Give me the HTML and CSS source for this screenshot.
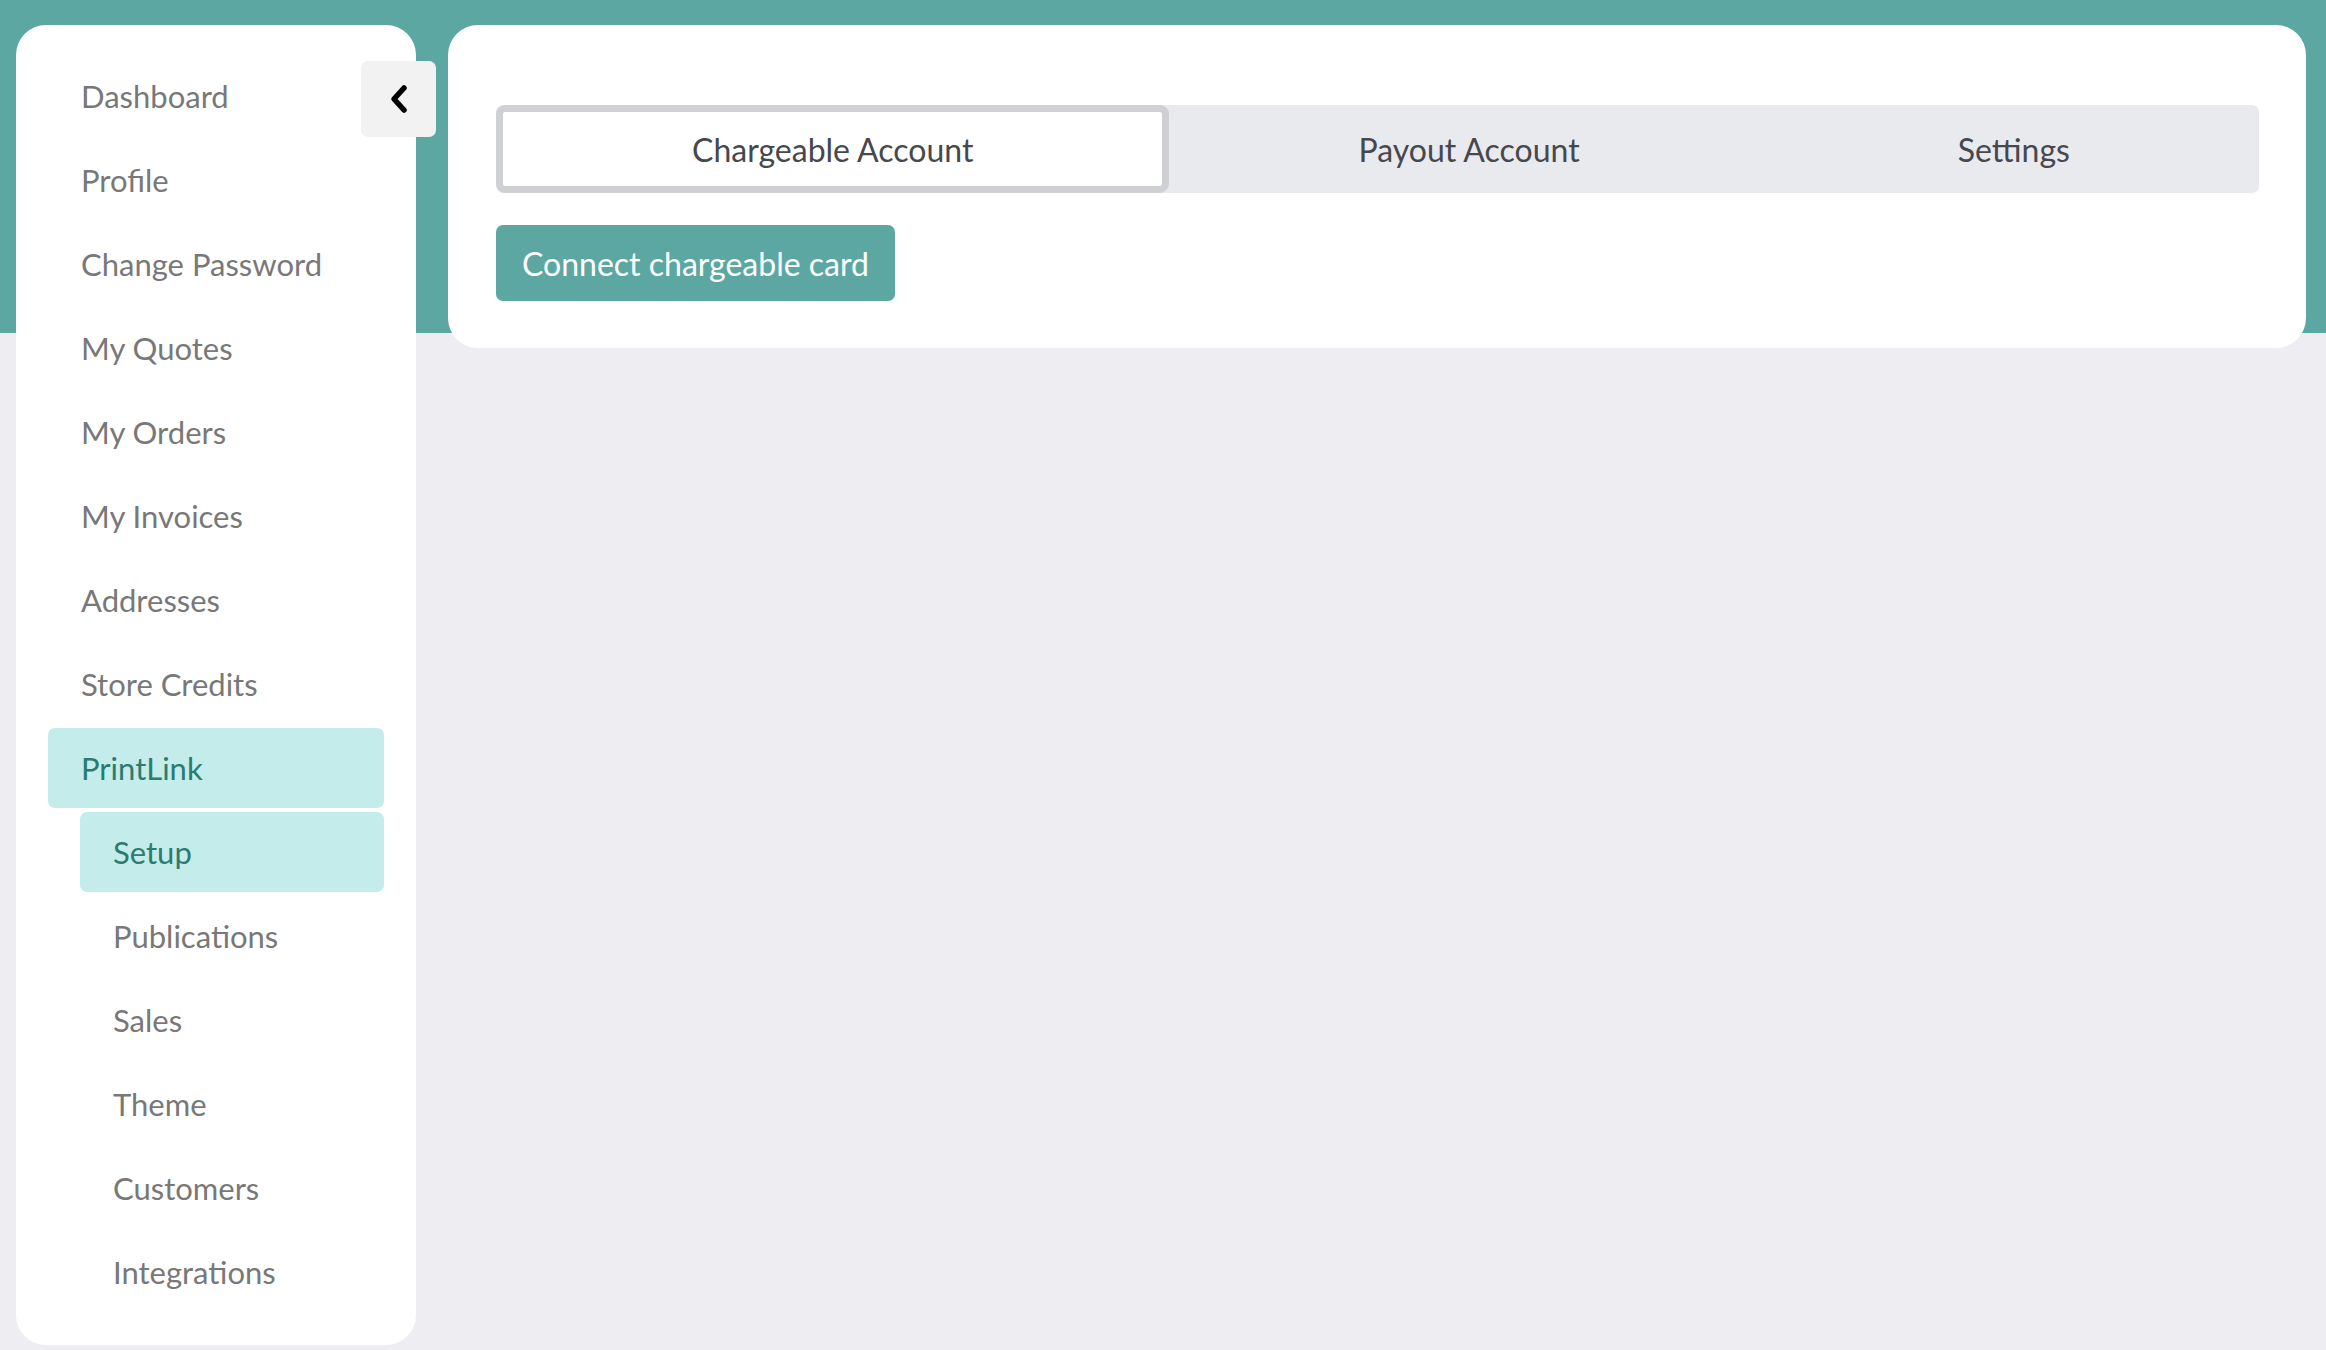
FILE: index.html
```html
<!DOCTYPE html>
<html lang="en">
<head>
    <meta charset="UTF-8">
    <meta name="viewport" content="width=device-width, initial-scale=1.0">
    <title>PrintLink Setup</title>
    <link rel="stylesheet" href="styles.css">
</head>
<body>
    <div class="layout">
        <aside class="sidebar">
            <button class="collapse-btn" type="button" aria-label="Collapse menu">
                <svg width="22" height="30" viewBox="0 0 22 30">
                    <polyline points="16,4 6,15 16,26" fill="none" stroke="#000" stroke-width="5.5" stroke-linecap="round" stroke-linejoin="round"/>
                </svg>
            </button>
            <nav class="menu">
                <a class="menu-item" href="#">Dashboard</a>
                <a class="menu-item" href="#">Profile</a>
                <a class="menu-item" href="#">Change Password</a>
                <a class="menu-item" href="#">My Quotes</a>
                <a class="menu-item" href="#">My Orders</a>
                <a class="menu-item" href="#">My Invoices</a>
                <a class="menu-item" href="#">Addresses</a>
                <a class="menu-item" href="#">Store Credits</a>
                <a class="menu-item active" href="#">PrintLink</a>
                <a class="menu-item sub active" href="#">Setup</a>
                <a class="menu-item sub" href="#">Publications</a>
                <a class="menu-item sub" href="#">Sales</a>
                <a class="menu-item sub" href="#">Theme</a>
                <a class="menu-item sub" href="#">Customers</a>
                <a class="menu-item sub" href="#">Integrations</a>
            </nav>
        </aside>

        <main class="content">
            <div class="card">
                <div class="tabs">
                    <button class="tab selected" type="button">Chargeable Account</button>
                    <button class="tab" type="button">Payout Account</button>
                    <button class="tab" type="button">Settings</button>
                </div>
                <button class="btn" type="button">Connect chargeable card</button>
            </div>
        </main>
    </div>
</body>
</html>
```

FILE: styles.css
```css
* {
    margin: 0;
    padding: 0;
    box-sizing: border-box;
    font-family: Lato, "Open Sans", Arial, sans-serif;
}

body {
    min-height: 1350px;
    background: linear-gradient(#5ca7a2 333px, #eeedf2 333px);
}

.layout {
    display: flex;
    align-items: flex-start;
    gap: 32px;
    padding: 25px 20px 0 16px;
}

.sidebar {
    position: relative;
    flex: 0 0 400px;
    background-color: white;
    border-radius: 30px;
    padding: 31px 32px 33px;
}

.collapse-btn {
    position: absolute;
    top: 36px;
    right: -20px;
    width: 75px;
    height: 76px;
    border: none;
    border-radius: 7px;
    background-color: #f2f2f2;
    display: flex;
    align-items: center;
    justify-content: center;
    cursor: pointer;
}

.menu {
    display: flex;
    flex-direction: column;
    gap: 4px;
}

.menu-item {
    display: flex;
    align-items: center;
    height: 80px;
    padding-left: 33px;
    border-radius: 7px;
    color: #787878;
    font-size: 31px;
    text-decoration: none;
}

.menu-item.sub {
    margin-left: 32px;
}

.menu-item.active {
    background-color: #c4ecea;
    color: #2b7b71;
}

.content {
    flex: 1;
}

.card {
    background-color: white;
    border-radius: 30px;
    padding: 80px 47px 47px 48px;
}

.tabs {
    display: flex;
    height: 88px;
    background-color: #e9eaee;
    border-radius: 7px;
    margin-bottom: 32px;
}

.tab {
    flex: 1 1 auto;
    border: none;
    background: none;
    color: #46484e;
    font-size: 32px;
    border-radius: 7px;
    cursor: pointer;
}

.tab.selected {
    background-color: white;
    border: 7px solid #cfd0d4;
    border-radius: 9px;
}

.btn {
    height: 76px;
    padding: 0 26px;
    border: none;
    border-radius: 7px;
    background-color: #5ca7a2;
    color: white;
    font-size: 32px;
    cursor: pointer;
}

.btn:hover {
    background-color: #529a95;
}
```
